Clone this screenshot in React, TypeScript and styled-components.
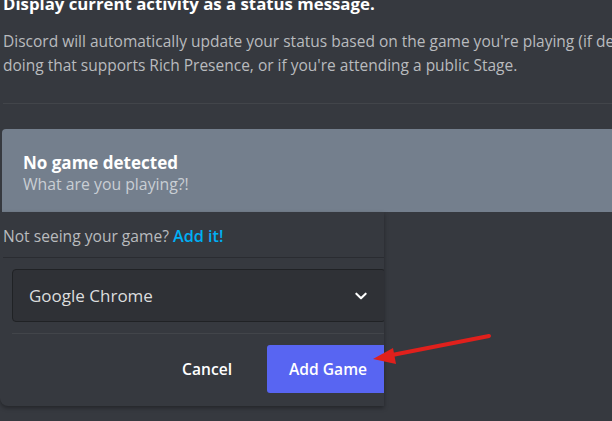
import styled, { createGlobalStyle } from 'styled-components';

const GlobalStyle = createGlobalStyle`
  html, body {
    margin: 0;
    padding: 0;
    background: #36393f;
  }
  body {
    font-family: "Open Sans", "Noto Sans", sans-serif;
    overflow: hidden;
  }
`;

const Page = styled.div`
  position: relative;
  width: 612px;
  height: 421px;
  overflow: hidden;
  background: #36393f;
`;

const Section = styled.div`
  padding-left: 3px;
`;

const Title = styled.h2`
  margin: -6px 0 0;
  font-size: 16.8px;
  line-height: 20px;
  font-weight: 700;
  color: #ffffff;
  white-space: nowrap;
`;

const Description = styled.p`
  margin: 15px 0 0;
  font-size: 15.5px;
  line-height: 24px;
  color: #b9bbbe;
  white-space: nowrap;
`;

const Divider = styled.div<{ $tone?: 'light' | 'dark'; $inset?: number }>`
  height: 1px;
  margin-left: ${(p) => p.$inset ?? 0}px;
  background: ${(p) => (p.$tone === 'dark' ? '#2a2c31' : '#42454a')};
`;

const Card = styled.div`
  margin: 25px 0 0 -1px;
  height: 83px;
  box-sizing: border-box;
  padding: 24px 0 0 21px;
  background: #747f8d;
  border-radius: 4px 0 0 0;
`;

const CardTitle = styled.div`
  font-size: 17px;
  line-height: 20px;
  font-weight: 700;
  color: #ffffff;
`;

const CardSub = styled.div`
  font-size: 15.8px;
  line-height: 22px;
  color: #c9ced4;
`;

const Popup = styled.div`
  width: 384px;
  height: 194px;
  overflow: hidden;
  background: #36393f;
  border-radius: 0 0 0 8px;
  box-shadow: 0 2px 4px rgba(0, 0, 0, 0.35);
`;

const Hint = styled.div`
  padding: 14px 0 0 3px;
  font-size: 15.6px;
  line-height: 20px;
  color: #b9bbbe;
  white-space: nowrap;
`;

const Link = styled.span`
  color: #00aff4;
  font-weight: 600;
  font-size: 16.2px;
`;

const HintDivider = styled(Divider)`
  margin-top: 11px;
`;

const Select = styled.div`
  margin: 11px 0 0 12px;
  width: 374px;
  height: 53px;
  box-sizing: border-box;
  display: flex;
  align-items: center;
  justify-content: space-between;
  padding: 0 17px 0 16px;
  background: #2f3136;
  border: 1px solid #202225;
  border-radius: 4px;
  font-size: 17px;
  color: #dcddde;
`;

const FooterDivider = styled(Divider)`
  margin-top: 11px;
`;

const Footer = styled.div`
  margin-top: 11px;
  width: 389px;
  display: flex;
  justify-content: flex-end;
  gap: 11px;
`;

const Button = styled.button<{ $primary?: boolean }>`
  height: 48px;
  padding: 0 ${(p) => (p.$primary ? 22 : 24)}px;
  border: none;
  border-radius: 3px;
  font-family: inherit;
  font-size: 15.6px;
  font-weight: 600;
  color: #ffffff;
  background: ${(p) => (p.$primary ? '#5865f2' : 'transparent')};
`;

const Arrow = styled.svg`
  position: absolute;
  left: 365px;
  top: 325px;
`;

const Chevron = () => (
  <svg width="14" height="14" viewBox="0 0 24 24">
    <path
      d="M4 8l8 8 8-8"
      fill="none"
      stroke="#ffffff"
      strokeWidth="3.5"
      strokeLinecap="round"
      strokeLinejoin="round"
    />
  </svg>
);

const App = () => {
  return (
    <>
      <GlobalStyle />
      <Page>
        <Section>
          <Title>Display current activity as a status message.</Title>
          <Description>
            Discord will automatically update your status based on the game you're playing (if detected), or what you're
            <br />
            doing that supports Rich Presence, or if you're attending a public Stage.
          </Description>
          <Divider style={{ marginTop: 26 }} />
        </Section>
        <Section>
          <Card>
            <CardTitle>No game detected</CardTitle>
            <CardSub>What are you playing?!</CardSub>
          </Card>
        </Section>
        <Popup>
          <Hint>
            Not seeing your game? <Link>Add it!</Link>
          </Hint>
          <HintDivider $tone="dark" $inset={3} />
          <Select>
            <span>Google Chrome</span>
            <Chevron />
          </Select>
          <FooterDivider $inset={12} />
          <Footer>
            <Button>Cancel</Button>
            <Button $primary>Add Game</Button>
          </Footer>
        </Popup>
        <Arrow width="135" height="45" viewBox="0 0 135 45">
          <line x1="124" y1="11" x2="22" y2="31" stroke="#e0201c" strokeWidth="4" strokeLinecap="round" />
          <polygon points="8,34 28,23 31,39" fill="#e0201c" />
        </Arrow>
      </Page>
    </>
  );
};

export default App;
